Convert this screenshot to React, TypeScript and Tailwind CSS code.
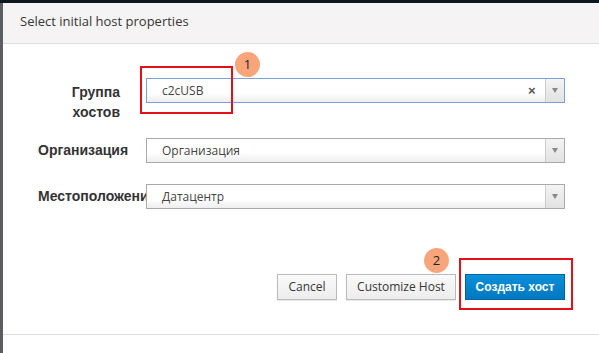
import React from 'react';

const SelectBox: React.FC<{ value: string; focused?: boolean; clearable?: boolean }> = ({ value, focused, clearable }) => (
  <div
    className={`relative flex h-[25px] w-[419px] items-stretch border bg-gradient-to-b from-white from-60% to-[#eeeeee] ${
      focused ? 'border-[#7fa0d6]' : 'border-[#aaaaaa]'
    }`}
  >
    <div className="flex flex-1 items-center pl-[15px] text-[12px] text-[#444] [font-family:'Open_Sans',sans-serif]">{value}</div>
    {clearable && (
      <div className="flex w-[17px] items-center justify-start text-[13px] font-bold text-[#555] [font-family:'Liberation_Sans',sans-serif]">
        ×
      </div>
    )}
    <div className="flex w-[19px] items-center justify-center border-l border-[#cccccc] bg-gradient-to-b from-[#f4f4f4] to-[#e2e2e2]">
      <div className="h-0 w-0 border-l-[3px] border-r-[3px] border-t-[5px] border-l-transparent border-r-transparent border-t-[#888]" />
    </div>
  </div>
);

const Badge: React.FC<{ n: string; className: string }> = ({ n, className }) => (
  <div
    className={`absolute flex h-[25px] w-[25px] items-center justify-center rounded-full bg-[#f9a57c] text-[13px] text-[#222] [font-family:'Open_Sans',sans-serif] ${className}`}
  >
    {n}
  </div>
);

export default function App() {
  return (
    <div className="relative flex h-[353px] w-[599px] flex-col overflow-hidden bg-white">
      <div className="h-[3px] bg-[#0d1722]" />
      <div className="flex flex-1">
        <div className="w-[3px] bg-[#5b5d60]" />
        <div className="flex flex-1 flex-col bg-white">
          {/* header */}
          <div className="flex h-[41px] items-center border-b border-[#dcdcdc] bg-[#f5f3f4] pl-[17px] pb-[2px]">
            <span className="text-[13px] text-[#363636] [font-family:'Open_Sans',sans-serif]">Select initial host properties</span>
          </div>

          {/* body */}
          <div className="flex h-[290px] flex-col pt-[34px]">
            <div className="flex">
              <div className="mt-[4px] w-[90px] ml-[35px] mr-[18px] pr-[8px] text-right text-[14px] font-bold leading-[20px] text-[#333] [font-family:'Liberation_Sans',sans-serif]">
                Группа хостов
              </div>
              <SelectBox value="c2cUSB" focused clearable />
            </div>
            <div className="mt-[16px] flex items-center">
              <div className="ml-[35px] mr-[18px] w-[90px] whitespace-nowrap text-right text-[14px] font-bold text-[#333] [font-family:'Liberation_Sans',sans-serif]">
                Организация
              </div>
              <SelectBox value="Организация" />
            </div>
            <div className="mt-[21px] flex items-center">
              <div className="ml-[35px] mr-[18px] w-[90px] whitespace-nowrap text-[14px] font-bold text-[#333] [font-family:'Liberation_Sans',sans-serif]">
                Местоположение
              </div>
              <div className="relative z-10 bg-white">
                <SelectBox value="Датацентр" />
              </div>
            </div>

            <div className="mt-[65px] flex justify-end gap-[9px] pr-[34px]">
              <button className="h-[26px] w-[60px] border border-[#bbbbbb] bg-gradient-to-b from-[#fafafa] to-[#ededed] text-[12px] text-[#363636] shadow-[0_1px_1px_rgba(0,0,0,0.08)] [font-family:'Open_Sans',sans-serif]">
                Cancel
              </button>
              <button className="h-[26px] w-[110px] border border-[#bbbbbb] bg-gradient-to-b from-[#fafafa] to-[#ededed] text-[12px] text-[#363636] shadow-[0_1px_1px_rgba(0,0,0,0.08)] [font-family:'Open_Sans',sans-serif]">
                Customize Host
              </button>
              <button className="h-[26px] w-[100px] border border-[#00659c] bg-gradient-to-b from-[#0b90da] to-[#0077c0] text-[12px] font-bold text-white [font-family:'Liberation_Sans',sans-serif]">
                Создать хост
              </button>
            </div>
          </div>
          <div className="flex-1 border-t border-[#dddddd]" />
        </div>
      </div>

      {/* annotations */}
      <div className="pointer-events-none absolute left-[140px] top-[66px] z-20 h-[48px] w-[93px] border-2 border-[#e3101a]" />
      <Badge n="1" className="left-[235px] top-[52px] z-30" />
      <div className="pointer-events-none absolute left-[459px] top-[258px] z-20 h-[52px] w-[114px] border-2 border-[#e3101a]" />
      <Badge n="2" className="left-[424px] top-[248px] z-30" />
    </div>
  );
}
